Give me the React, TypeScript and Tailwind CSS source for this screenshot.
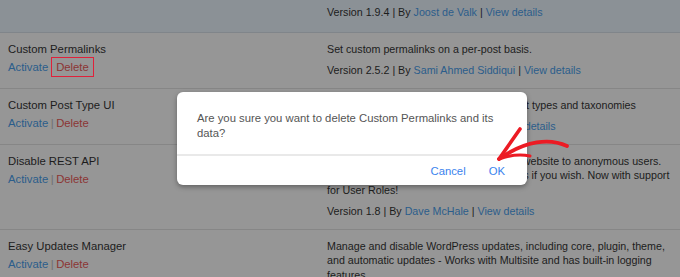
import React from "react";

type Plugin = {
  name?: string;
  desc?: string[];
  version: string;
  author: string;
  top?: boolean;
  boxed?: boolean;
};

const PLUGINS: Plugin[] = [
  { version: "1.9.4", author: "Joost de Valk", top: true },
  {
    name: "Custom Permalinks",
    desc: ["Set custom permalinks on a per-post basis."],
    version: "2.5.2",
    author: "Sami Ahmed Siddiqui",
    boxed: true,
  },
  {
    name: "Custom Post Type UI",
    desc: ["Admin UI panel for registering custom post types and taxonomies"],
    version: "1.6.1",
    author: "WebDevStudios",
  },
  {
    name: "Disable REST API",
    desc: [
      "Disable the use of the REST API on your website to anonymous users.",
      "You can optionally allow specific endpoints if you wish. Now with support",
      "for User Roles!",
    ],
    version: "1.8",
    author: "Dave McHale",
  },
  {
    name: "Easy Updates Manager",
    desc: [
      "Manage and disable WordPress updates, including core, plugin, theme,",
      "and automatic updates - Works with Multisite and has built-in logging",
      "features.",
    ],
    version: "9.0.1",
    author: "Easy Updates Manager Team",
  },
];

function Meta({ p }: { p: Plugin }) {
  return (
    <div className="whitespace-nowrap">
      Version {p.version} | By <span className="text-[#2b5d8b]">{p.author}</span> |{" "}
      <span className="text-[#2b5d8b]">View details</span>
    </div>
  );
}

function Row({ p }: { p: Plugin }) {
  if (p.top) {
    return (
      <div className="flex bg-[#8b9196] border-b border-[#80858a] pt-[4.5px] pb-[12.5px] text-[10.7px]">
        <div className="w-[327px] shrink-0" />
        <Meta p={p} />
      </div>
    );
  }
  return (
    <div className="flex border-b border-[#868686] pt-[9px] pb-[10px]">
      <div className="w-[327px] shrink-0 pl-2 text-[11.3px]">
        <div>{p.name}</div>
        <div className="mt-[4px] flex items-center whitespace-nowrap">
          <span className="text-[#2b5d8b]">Activate</span>
          <span className="relative flex items-center">
            <span className={p.boxed ? "mx-[2.5px] text-transparent" : "mx-[2.5px] text-[#6f6f6f]"}>|</span>
            <span className="text-[#8c3434]">Delete</span>
            {p.boxed && (
              <span className="absolute left-[3px] -right-[5px] -top-[3.5px] -bottom-[2.5px] border-[1.5px] border-[#e0213a]" />
            )}
          </span>
        </div>
      </div>
      <div className="flex-1 min-w-0 text-[10.7px]">
        {p.desc?.map((l, i) => (
          <div key={i} className="whitespace-nowrap">
            {l}
          </div>
        ))}
        <div className="mt-[7px]">
          <Meta p={p} />
        </div>
      </div>
    </div>
  );
}

export default function App() {
  return (
    <div
      className="relative w-[680px] h-[277px] overflow-hidden bg-[#969696] text-[#1c1c1c] leading-[14.5px]"
      style={{ fontFamily: '"Liberation Sans", Arial, sans-serif' }}
    >
      {PLUGINS.map((p, i) => (
        <Row key={i} p={p} />
      ))}

      <div className="absolute left-[177px] top-[92px] w-[350px] h-[93px] rounded-[6px] bg-white shadow-[0_2px_5px_rgba(0,0,0,0.35)] flex flex-col">
        <div className="h-[62px] px-5 pt-[19px] text-[11.3px] leading-[15px] text-[#555]">
          Are you sure you want to delete Custom Permalinks and its data?
        </div>
        <div className="h-[2px] bg-[#e9e9e9]" />
        <div className="flex-1 flex items-center justify-end gap-[23px] pr-[22px] pt-[2px] text-[11.3px] text-[#3a83ee]">
          <span>Cancel</span>
          <span>OK</span>
        </div>
      </div>

      <svg
        className="absolute left-0 top-0 pointer-events-none"
        width="680"
        height="277"
        viewBox="0 0 680 277"
        fill="none"
        stroke="#ec1b24"
        strokeLinecap="round"
        strokeLinejoin="round"
      >
        <path d="M567 146 C550 138 526 140 499 159" strokeWidth="3.8" />
        <path d="M499 159 L520 129" strokeWidth="3.6" />
        <path d="M499 159 C510 155 520 154 530 156" strokeWidth="3" />
      </svg>
    </div>
  );
}
